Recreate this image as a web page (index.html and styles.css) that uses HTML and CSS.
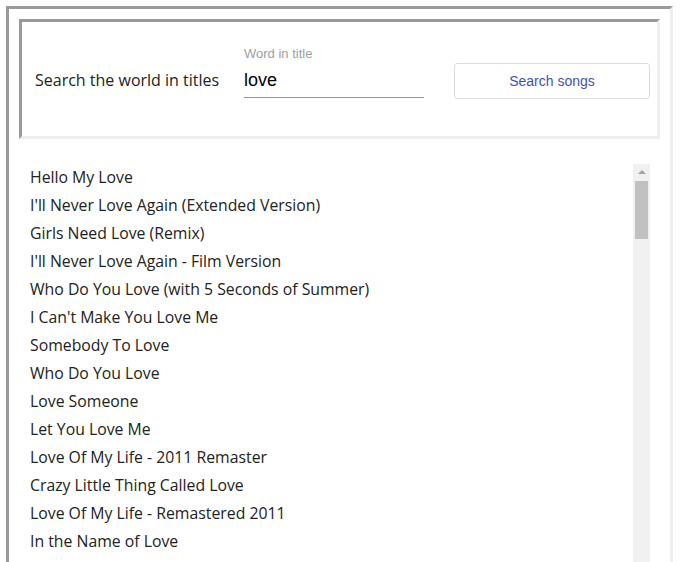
FILE: index.html
```html
<!DOCTYPE html>
<html>
<head>
<meta charset="utf-8">
<link rel="stylesheet" href="styles.css">
</head>
<body>
<div class="panel">
  <div class="search">
    <span class="search-label">Search the world in titles</span>
    <div class="field">
      <span class="field-label">Word in title</span>
      <span class="field-input">love</span>
    </div>
    <button class="search-btn">Search songs</button>
  </div>
  <div class="results">
    <ul class="items">
      <li>Hello My Love</li>
      <li>I'll Never Love Again (Extended Version)</li>
      <li>Girls Need Love (Remix)</li>
      <li>I'll Never Love Again - Film Version</li>
      <li>Who Do You Love (with 5 Seconds of Summer)</li>
      <li>I Can't Make You Love Me</li>
      <li>Somebody To Love</li>
      <li>Who Do You Love</li>
      <li>Love Someone</li>
      <li>Let You Love Me</li>
      <li>Love Of My Life - 2011 Remaster</li>
      <li>Crazy Little Thing Called Love</li>
      <li>Love Of My Life - Remastered 2011</li>
      <li>In the Name of Love</li>
    </ul>
    <div class="scrollbar">
      <div class="arrow"></div>
      <div class="thumb"></div>
    </div>
  </div>
</div>
</body>
</html>
```
FILE: styles.css
```css
html, body {
  margin: 0;
  padding: 0;
  background: #fff;
  overflow: hidden;
}
body {
  padding: 6px;
  height: 562px;
  box-sizing: border-box;
}
.panel {
  border: 3px solid;
  border-color: #9a9a9a #eeeeee #eeeeee #9a9a9a;
  height: 600px;
  width: 667px;
  box-sizing: border-box;
  display: flex;
  flex-direction: column;
}
.search {
  margin: 10px 10px 0 10px;
  height: 120px;
  box-sizing: border-box;
  border: 3px solid;
  border-color: #9a9a9a #eeeeee #eeeeee #9a9a9a;
  display: flex;
  align-items: flex-start;
  padding-left: 13px;
  padding-right: 7px;
  flex-shrink: 0;
}
.search-label {
  font-family: "Open Sans", sans-serif;
  font-size: 16px;
  line-height: 22px;
  color: #222;
  width: 209px;
  flex-shrink: 0;
  margin-top: 47px;
}
.field {
  display: flex;
  flex-direction: column;
  width: 180px;
  border-bottom: 1px solid #949494;
  margin-top: 25px;
}
.field-label {
  font-family: "Liberation Sans", Arial, sans-serif;
  font-size: 13px;
  color: #9e9e9e;
  line-height: 14px;
}
.field-input {
  font-family: "Liberation Sans", Arial, sans-serif;
  font-size: 18px;
  color: #000;
  line-height: 22px;
  padding: 8px 0 6px 0;
}
.search-btn {
  margin-left: auto;
  margin-top: 41px;
  width: 196px;
  height: 36px;
  background: #fff;
  border: 1px solid #dddddd;
  border-radius: 3px;
  font-family: "Liberation Sans", Arial, sans-serif;
  font-size: 14px;
  color: #3f51b5;
}
.results {
  margin: 25px 20px 0 10px;
  display: flex;
  flex: 1;
}
.items {
  list-style: none;
  margin: -1px 0 0 0;
  padding: 0 0 0 11px;
  flex: 1;
}
.items li {
  font-family: "Open Sans", sans-serif;
  font-size: 15.8px;
  color: #222;
  line-height: 28px;
}
.scrollbar {
  width: 17px;
  background: #f1f1f1;
  display: flex;
  flex-direction: column;
  align-items: center;
}
.arrow {
  margin-top: 6px;
  width: 0;
  height: 0;
  border-left: 4px solid transparent;
  border-right: 4px solid transparent;
  border-bottom: 4px solid #a3a3a3;
}
.thumb {
  margin-top: 7px;
  width: 13px;
  height: 58px;
  background: #c1c1c1;
}
```
